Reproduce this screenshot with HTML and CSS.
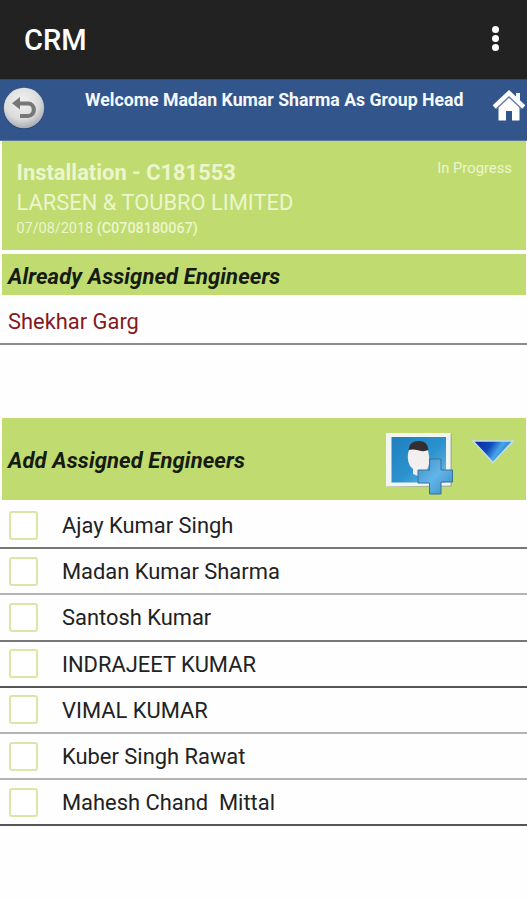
FILE: index.html
```html
<!DOCTYPE html>
<html lang="en">
<head>
    <meta charset="UTF-8">
    <meta name="viewport" content="width=device-width, initial-scale=1.0">
    <title>CRM</title>
    <link rel="stylesheet" href="styles.css">
</head>
<body>
    <header class="app-bar">
        <h1>CRM</h1>
        <button class="menu-btn" aria-label="More options">
            <span class="dot"></span>
            <span class="dot"></span>
            <span class="dot"></span>
        </button>
    </header>

    <nav class="welcome-bar">
        <button class="back-btn" aria-label="Back">
            <svg width="44" height="44" viewBox="0 0 44 44">
                <defs>
                    <radialGradient id="silver" cx="45%" cy="35%" r="65%">
                        <stop offset="0" stop-color="#f2f2f2"></stop>
                        <stop offset="0.65" stop-color="#dcdcdc"></stop>
                        <stop offset="1" stop-color="#a9adb2"></stop>
                    </radialGradient>
                </defs>
                <circle cx="22" cy="22.7" r="20.5" fill="#24477c"></circle>
                <circle cx="22" cy="22" r="20.2" fill="url(#silver)"></circle>
                <path d="M17 17.5H26A5.8 6.2 0 0 1 26 30H18" fill="none" stroke="#777" stroke-width="4.2"></path>
                <path d="M10 17.3L18 11V23.5Z" fill="#777"></path>
            </svg>
        </button>
        <p class="welcome-text">Welcome Madan Kumar Sharma As Group Head</p>
        <button class="home-btn" aria-label="Home">
            <svg width="34" height="32" viewBox="0 0 34 32">
                <path d="M24 3H28V11L24 7Z" fill="#f4f7fb"></path>
                <path d="M6.5 16L17 6L27.5 16V30.500H20V21H14V30.500H6.5Z" fill="#fff"></path>
                <path d="M2.8 18.2L17 4.800L31.2 18.2" fill="none" stroke="#667fa7" stroke-width="4.6"></path>
                <path d="M2.2 16.8L17 3L31.8 16.8" fill="none" stroke="#fff" stroke-width="4.4"></path>
            </svg>
        </button>
    </nav>

    <main>
        <section class="call-card">
            <div class="call-info">
                <h2>Installation - C181553</h2>
                <p class="customer">LARSEN &amp; TOUBRO LIMITED</p>
                <p class="call-date">07/08/2018 <b>(C0708180067)</b></p>
            </div>
            <span class="status">In Progress</span>
        </section>

        <section class="assigned">
            <h3 class="section-title">Already Assigned Engineers</h3>
            <p class="assigned-name">Shekhar Garg</p>
        </section>

        <section class="add-engineers">
            <div class="section-title add-title">
                <h3>Add Assigned Engineers</h3>
                <svg class="add-icon" width="72" height="66" viewBox="0 0 72 66">
                    <defs>
                        <linearGradient id="photo" x1="0" y1="0" x2="1" y2="1">
                            <stop offset="0" stop-color="#1e7fbd"></stop>
                            <stop offset="0.55" stop-color="#2c93cf"></stop>
                            <stop offset="1" stop-color="#72bfe7"></stop>
                        </linearGradient>
                        <linearGradient id="plus" x1="0" y1="0" x2="1" y2="1">
                            <stop offset="0" stop-color="#3e8fc9"></stop>
                            <stop offset="0.5" stop-color="#62b5e8"></stop>
                            <stop offset="1" stop-color="#398bc1"></stop>
                        </linearGradient>
                    </defs>
                    <path d="M2 2H67V55H2Z" fill="#a7b59a"></path>
                    <path d="M1 1H65.5V53.5L1 54.5Z" fill="#f3f5f2"></path>
                    <path d="M6.5 5H61V50.5H6.5Z" fill="url(#photo)"></path>
                    <path d="M24 18Q24 10 34 10Q43 10 43 18Q46 31 42 38L36 40L33 44L28 42V37L25 34Q21 26 24 18Z" fill="#f3eff0"></path>
                    <path d="M23.5 18Q24 9 34 9Q43 9 43.5 18Q39 20 34 18.5Q28 17 23.5 18Z" fill="#342e31"></path>
                    <path d="M44.5 27H56V38H67.5V50H56V62H44.5V51H33V38H44.5Z" fill="url(#plus)" stroke="#397198" stroke-width="1"></path>
                </svg>
                <svg class="toggle-icon" width="44" height="26" viewBox="0 0 44 26">
                    <defs>
                        <linearGradient id="arrow" x1="0" y1="0" x2="1" y2="0.35">
                            <stop offset="0.05" stop-color="#0a2a9d"></stop>
                            <stop offset="0.45" stop-color="#1048bb"></stop>
                            <stop offset="0.7" stop-color="#48a7e6"></stop>
                            <stop offset="1" stop-color="#2168cb"></stop>
                        </linearGradient>
                    </defs>
                    <path d="M2 2H42L22 23.5Z" fill="url(#arrow)" stroke="#c5dce9" stroke-width="1.5"></path>
                </svg>
            </div>

            <ul class="engineer-list">
                <li><label><input type="checkbox"><span>Ajay Kumar Singh</span></label></li>
                <li><label><input type="checkbox"><span>Madan Kumar Sharma</span></label></li>
                <li><label><input type="checkbox"><span>Santosh Kumar</span></label></li>
                <li><label><input type="checkbox"><span>INDRAJEET KUMAR</span></label></li>
                <li><label><input type="checkbox"><span>VIMAL KUMAR</span></label></li>
                <li><label><input type="checkbox"><span>Kuber Singh Rawat</span></label></li>
                <li><label><input type="checkbox"><span>Mahesh Chand&nbsp; Mittal</span></label></li>
            </ul>
        </section>
    </main>
</body>
</html>
```
FILE: styles.css
```css
* {
    margin: 0;
    padding: 0;
    box-sizing: border-box;
}

body {
    background-color: #fefefe;
    color: #222;
    font-family: Roboto, "Liberation Sans", sans-serif;
    min-height: 100vh;
}

button {
    background: none;
    border: none;
    cursor: pointer;
}

svg {
    display: block;
}

.app-bar {
    display: flex;
    justify-content: space-between;
    align-items: center;
    height: 79px;
    padding: 0 23px 0 24px;
    background-color: #222;
    color: #fff;
}

.app-bar h1 {
    font-size: 29px;
    font-weight: 500;
}

.menu-btn {
    display: flex;
    flex-direction: column;
    align-items: center;
    gap: 2px;
    width: 17px;
    margin-top: -3px;
}

.dot {
    width: 7px;
    height: 7px;
    border-radius: 50%;
    background-color: #fff;
}

.welcome-bar {
    display: flex;
    align-items: flex-start;
    height: 62px;
    padding: 7px 1px 0 2px;
    background-color: #32568b;
    border-top: 1px solid #2b4876;
    border-bottom: 1px solid #58799b;
}

.back-btn {
    margin-top: -1px;
}

.welcome-text {
    flex: 1;
    padding: 2px 0 0 39px;
    color: #f4f8ff;
    font-size: 17.7px;
    font-weight: 700;
    line-height: 22px;
    white-space: nowrap;
}

.home-btn {
    margin-top: 3px;
}

.call-card {
    display: flex;
    justify-content: space-between;
    height: 109px;
    margin: 0 1px 0 2px;
    padding: 17px 14px 0 14.5px;
    background-color: #c0db70;
    color: #ecf6cc;
}

.call-card h2 {
    font-size: 21.9px;
    font-weight: 700;
    line-height: 30px;
}

.customer {
    font-size: 21.9px;
    line-height: 30px;
}

.call-date {
    font-size: 14.4px;
    line-height: 21px;
}

.call-date b {
    font-weight: 500;
}

.status {
    font-size: 14.8px;
    line-height: 20px;
}

.section-title {
    margin: 4px 1px 0 2px;
    padding-left: 6px;
    background-color: #c0db70;
    color: #151b10;
    font-size: 22px;
    font-style: italic;
    font-weight: 700;
    letter-spacing: 0.12px;
}

h3.section-title {
    height: 41px;
    line-height: 46px;
}

.assigned-name {
    height: 50px;
    padding-left: 8px;
    border-bottom: 2px solid #8c8c8c;
    color: #861820;
    font-size: 21.9px;
    line-height: 53px;
}

.add-engineers {
    margin-top: 73px;
}

.add-title {
    display: flex;
    align-items: flex-start;
    height: 82px;
    margin-top: 0;
    padding-top: 13px;
}

.add-title h3 {
    flex: 1;
    font-size: 22px;
    font-weight: 700;
    line-height: 60px;
}

.add-icon {
    margin: 1px 15px 0 0;
}

.toggle-icon {
    margin: 8px 11px 0 0;
}

.add-title .add-icon {
    margin-right: 14px;
}

.engineer-list {
    list-style: none;
    padding-top: 3px;
}

.engineer-list li {
    height: 46.2px;
    border-bottom: 2px solid #777;
}

.engineer-list li:nth-child(2),
.engineer-list li:nth-child(5),
.engineer-list li:nth-child(6) {
    border-bottom-color: #b4b4b4;
}

.engineer-list li:nth-child(4),
.engineer-list li:nth-child(7) {
    border-bottom-color: #555;
}

.engineer-list label {
    display: flex;
    align-items: center;
    height: 100%;
    padding: 2px 0 0 9px;
}

.engineer-list input {
    appearance: none;
    width: 29px;
    height: 29px;
    margin: 0 24px 2px 0;
    border: 2px solid #dae6a8;
    border-radius: 3px;
    background-color: #fff;
}

.engineer-list span {
    font-size: 21.9px;
    line-height: 30px;
}
```
